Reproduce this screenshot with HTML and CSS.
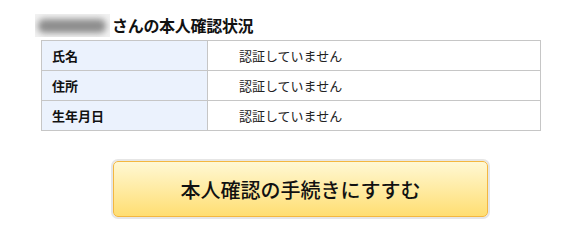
FILE: index.html
```html
<!DOCTYPE html>
<html lang="ja">
<head>
<meta charset="utf-8">
<link rel="stylesheet" href="styles.css">
</head>
<body>
<div class="page">
  <h2 class="title"><span class="blur-name"><span class="blur-ink"></span></span><span class="title-text">さんの本人確認状況</span></h2>
  <table class="status">
    <tr><th>氏名</th><td>認証していません</td></tr>
    <tr><th>住所</th><td>認証していません</td></tr>
    <tr><th>生年月日</th><td>認証していません</td></tr>
  </table>
  <div class="actions">
    <a class="btn" href="#">本人確認の手続きにすすむ</a>
  </div>
</div>
</body>
</html>
```
FILE: styles.css
```css
html, body {
  margin: 0;
  padding: 0;
  background: #ffffff;
}
body {
  font-family: "Noto Sans CJK JP", "Liberation Sans", sans-serif;
  color: #111;
}
.page {
  padding: 13px 0 0 35px;
}
.title {
  display: flex;
  align-items: center;
  margin: 0;
  height: 24px;
  font-size: 16px;
  font-weight: bold;
  line-height: 24px;
}
.blur-name {
  display: inline-block;
  width: 75px;
  height: 23px;
  background: #f2f2f2;
  margin-right: 2px;
  overflow: hidden;
  position: relative;
}
.blur-ink {
  position: absolute;
  left: 3px;
  top: 5px;
  width: 68px;
  height: 14px;
  background: #8e8e8e;
  border-radius: 6px;
  filter: blur(3px);
}
.title-text {
  letter-spacing: -0.3px;
}
.status {
  margin: 3px 0 0 6px;
  width: 500px;
  border-collapse: collapse;
  font-size: 13px;
}
.status th, .status td {
  border: 1px solid #c6c6c6;
  height: 29px;
  padding: 0;
  line-height: 29px;
}
.status th {
  width: 155px;
  padding-left: 10px;
  text-align: left;
  font-weight: bold;
  background: #ebf2fd;
  color: #111;
}
.status td {
  padding-left: 31px;
  color: #222;
}
.actions {
  padding: 28px 0 0 76px;
}
.btn {
  display: flex;
  align-items: center;
  justify-content: center;
  box-sizing: border-box;
  width: 375px;
  height: 56px;
  margin: 2px;
  border: 1px solid #f4b740;
  border-radius: 5px;
  box-shadow: 0 0 0 2px #e6e6e6;
  background: linear-gradient(#fff8d4, #ffde72);
  color: #111;
  font-size: 20px;
  font-weight: 500;
  text-decoration: none;
}
```
